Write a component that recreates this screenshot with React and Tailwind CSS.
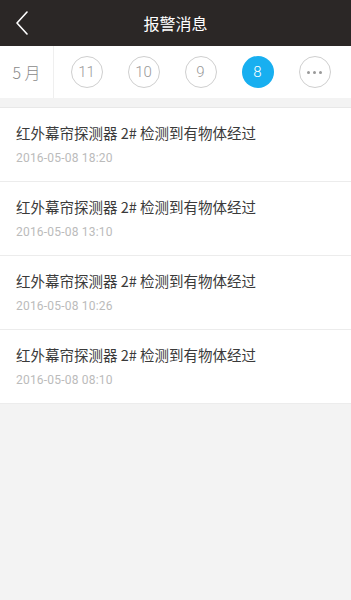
import React from 'react';

const alarms = [
    { title: '红外幕帘探测器 2# 检测到有物体经过', time: '2016-05-08 18:20' },
    { title: '红外幕帘探测器 2# 检测到有物体经过', time: '2016-05-08 13:10' },
    { title: '红外幕帘探测器 2# 检测到有物体经过', time: '2016-05-08 10:26' },
    { title: '红外幕帘探测器 2# 检测到有物体经过', time: '2016-05-08 08:10' },
];

const days = ['11', '10', '9', '8'];

export default function App() {
    return (
        <div
            className="min-h-[600px] bg-[#f3f3f3]"
            style={{ fontFamily: '"Noto Sans CJK SC", Roboto, sans-serif' }}
        >
            {/* Header */}
            <div className="relative h-[46px] bg-[#2b2726] flex items-center justify-center">
                <button className="absolute left-[12px] top-[10px] w-[20px] h-[26px] flex items-center justify-center">
                    <svg width="14" height="24" viewBox="0 0 14 24" fill="none">
                        <path d="M12 1L2 12L12 23" stroke="#ffffff" strokeWidth="1.6" strokeLinecap="round" strokeLinejoin="round" />
                    </svg>
                </button>
                <h1 className="text-white text-[16px] leading-none">报警消息</h1>
            </div>

            {/* Day tabs */}
            <div className="flex h-[52px] bg-white">
                <div className="w-[54px] flex items-center justify-center border-r border-[#efefef] text-[16px] text-[#8a8a8a] font-light">
                    5 月
                </div>
                <div className="flex items-center pl-[4px]">
                    {days.map((d) => (
                        <div key={d} className="w-[57px] flex items-center justify-center">
                            {d === '8' ? (
                                <div className="w-[32px] h-[32px] rounded-full bg-[#18aff0] flex items-center justify-center text-white text-[15px]" style={{ fontFamily: 'Roboto, sans-serif', fontWeight: 300 }}>
                                    {d}
                                </div>
                            ) : (
                                <div className="w-[32px] h-[32px] rounded-full border border-[#cfcfcf] flex items-center justify-center text-[#999999] text-[15px]" style={{ fontFamily: 'Roboto, sans-serif', fontWeight: 300 }}>
                                    {d}
                                </div>
                            )}
                        </div>
                    ))}
                    <div className="w-[57px] flex items-center justify-center">
                        <div className="w-[32px] h-[32px] rounded-full border border-[#cfcfcf] flex items-center justify-center gap-[3px]">
                            <span className="w-[3px] h-[3px] rounded-full bg-[#999999]" />
                            <span className="w-[3px] h-[3px] rounded-full bg-[#999999]" />
                            <span className="w-[3px] h-[3px] rounded-full bg-[#999999]" />
                        </div>
                    </div>
                </div>
            </div>

            {/* List */}
            <div className="mt-[9px] border-t border-[#e8e8e8] bg-white">
                {alarms.map((a, i) => (
                    <div key={i} className="h-[74px] border-b border-[#ececec] px-[16px] pt-[14px]">
                        <div className="text-[14.5px] leading-[22px] text-[#3a3a3a]">{a.title}</div>
                        <div className="mt-[5px] text-[12px] leading-[18px] text-[#bbbbbb] tracking-[0.2px]" style={{ fontFamily: 'Roboto, sans-serif' }}>
                            {a.time}
                        </div>
                    </div>
                ))}
            </div>
        </div>
    );
}
